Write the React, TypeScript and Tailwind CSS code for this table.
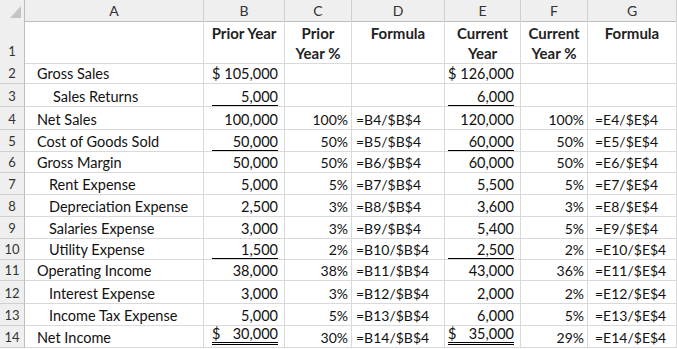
type Amt = { v: string; cur?: boolean; line?: "single" | "double" };

type Row = {
  n: number;
  label: string;
  pad: string;
  h: string;
  b?: Amt;
  c?: string;
  d?: string;
  e?: Amt;
  f?: string;
  g?: string;
};

const COLS = "grid grid-cols-[25px_179px_81px_67px_93px_76px_67px_1fr]";

const ROWS: Row[] = [
  { n: 2, label: "Gross Sales", pad: "pl-[12px]", h: "h-[23px]", b: { v: "105,000", cur: true }, e: { v: "126,000", cur: true } },
  { n: 3, label: "Sales Returns", pad: "pl-[28px]", h: "h-[23px]", b: { v: "5,000", line: "single" }, e: { v: "6,000", line: "single" } },
  { n: 4, label: "Net Sales", pad: "pl-[12px]", h: "h-[23px]", b: { v: "100,000" }, c: "100%", d: "=B4/$B$4", e: { v: "120,000" }, f: "100%", g: "=E4/$E$4" },
  { n: 5, label: "Cost of Goods Sold", pad: "pl-[12px]", h: "h-[22px]", b: { v: "50,000", line: "single" }, c: "50%", d: "=B5/$B$4", e: { v: "60,000", line: "single" }, f: "50%", g: "=E5/$E$4" },
  { n: 6, label: "Gross Margin", pad: "pl-[12px]", h: "h-[21px]", b: { v: "50,000" }, c: "50%", d: "=B6/$B$4", e: { v: "60,000" }, f: "50%", g: "=E6/$E$4" },
  { n: 7, label: "Rent Expense", pad: "pl-[24px]", h: "h-[22px]", b: { v: "5,000" }, c: "5%", d: "=B7/$B$4", e: { v: "5,500" }, f: "5%", g: "=E7/$E$4" },
  { n: 8, label: "Depreciation Expense", pad: "pl-[24px]", h: "h-[22px]", b: { v: "2,500" }, c: "3%", d: "=B8/$B$4", e: { v: "3,600" }, f: "3%", g: "=E8/$E$4" },
  { n: 9, label: "Salaries Expense", pad: "pl-[24px]", h: "h-[22px]", b: { v: "3,000" }, c: "3%", d: "=B9/$B$4", e: { v: "5,400" }, f: "5%", g: "=E9/$E$4" },
  { n: 10, label: "Utility Expense", pad: "pl-[24px]", h: "h-[21px]", b: { v: "1,500", line: "single" }, c: "2%", d: "=B10/$B$4", e: { v: "2,500", line: "single" }, f: "2%", g: "=E10/$E$4" },
  { n: 11, label: "Operating Income", pad: "pl-[12px]", h: "h-[21px]", b: { v: "38,000" }, c: "38%", d: "=B11/$B$4", e: { v: "43,000" }, f: "36%", g: "=E11/$E$4" },
  { n: 12, label: "Interest Expense", pad: "pl-[24px]", h: "h-[23px]", b: { v: "3,000" }, c: "3%", d: "=B12/$B$4", e: { v: "2,000" }, f: "2%", g: "=E12/$E$4" },
  { n: 13, label: "Income Tax Expense", pad: "pl-[24px]", h: "h-[22px]", b: { v: "5,000" }, c: "5%", d: "=B13/$B$4", e: { v: "6,000" }, f: "5%", g: "=E13/$E$4" },
  { n: 14, label: "Net Income", pad: "pl-[12px]", h: "h-[22px]", b: { v: "30,000", cur: true, line: "double" }, c: "30%", d: "=B14/$B$4", e: { v: "35,000", cur: true, line: "double" }, f: "29%", g: "=E14/$E$4" },
];

const cell = "border-r border-b border-[#d9d9d9] flex items-end pb-[1px] leading-[17px] overflow-hidden whitespace-nowrap";

function Money({ amt, pad }: { amt?: Amt; pad: string }) {
  if (!amt) return <div className={cell} />;
  const line =
    amt.line === "single"
      ? "border-b border-black leading-[17px]"
      : amt.line === "double"
        ? "border-b-[3px] border-double border-black leading-[16px]"
        : "border-b border-transparent leading-[17px]";
  const bottom = amt.line === "double" ? "pb-[2px]" : "pb-0";
  return (
    <div className={`border-r border-b border-[#d9d9d9] flex items-end overflow-hidden whitespace-nowrap ${pad} ${bottom} pr-[6px] text-[14.5px]`}>
      <div className={`flex w-full justify-between ${line}`}>
        <span>{amt.cur ? "$" : ""}</span>
        <span>{amt.v}</span>
      </div>
    </div>
  );
}

function ColHead({ label }: { label: string }) {
  return (
    <div className="flex items-center justify-center border-r border-b border-r-[#d0d0d0] border-b-[#bdbdbd] bg-[#efefef] text-[#333]">
      {label}
    </div>
  );
}

function RowHead({ n, pb = "pb-[1px]" }: { n: number; pb?: string }) {
  return (
    <div className={`flex items-end justify-center border-r border-b border-r-[#bdbdbd] border-b-[#d0d0d0] bg-[#efefef] ${pb} text-[13px] leading-[17px] font-normal text-[#333]`}>
      {n}
    </div>
  );
}

export default function App() {
  return (
    <div className="h-[349px] w-[677px] overflow-hidden bg-white font-['Lato',sans-serif] text-[14px] text-[#111]">
      <div className={`${COLS} h-[21px]`}>
        <div className="flex items-end justify-end border-r border-b border-r-[#bdbdbd] border-b-[#bdbdbd] bg-[#efefef] pr-[3px] pb-[3px]">
          <svg width="11" height="12" viewBox="0 0 11 12">
            <polygon points="11,0 11,12 0,12" fill="#c4c4c4" />
          </svg>
        </div>
        {["A", "B", "C", "D", "E", "F", "G"].map((c) => (
          <ColHead key={c} label={c} />
        ))}
      </div>

      <div className={`${COLS} h-[40px] text-[15px] font-bold text-[#222]`}>
        <RowHead n={1} pb="pb-[3px]" />
        <div className={cell} />
        {[["Prior Year"], ["Prior", "Year %"], ["Formula"], ["Current", "Year"], ["Current", "Year %"], ["Formula"]].map((lines, i) => (
          <div key={i} className="flex flex-col items-center border-r border-b border-[#d9d9d9] pt-[2px] leading-[20px]">
            {lines.map((l) => (
              <span key={l}>{l}</span>
            ))}
          </div>
        ))}
      </div>

      {ROWS.map((r) => (
        <div key={r.n} className={`${COLS} ${r.h}`}>
          <RowHead n={r.n} />
          <div className={`${cell} ${r.pad} text-[14.5px]`}>{r.label}</div>
          <Money amt={r.b} pad="pl-[8px]" />
          <div className={`${cell} justify-end pr-[3px]`}>{r.c}</div>
          <div className={`${cell} pl-[4px]`}>{r.d}</div>
          <Money amt={r.e} pad="pl-[3px]" />
          <div className={`${cell} justify-end pr-[3px]`}>{r.f}</div>
          <div className={`${cell} pl-[7px]`}>{r.g}</div>
        </div>
      ))}
    </div>
  );
}
